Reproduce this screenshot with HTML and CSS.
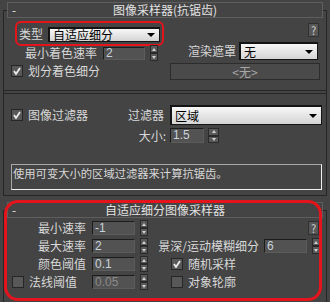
FILE: index.html
```html
<!DOCTYPE html>
<html lang="zh-CN">
<head>
    <meta charset="UTF-8">
    <title>图像采样器</title>
    <link rel="stylesheet" href="styles.css">
</head>
<body>

    <!-- Rollout: image sampler (antialiasing) -->
    <div class="rollout r1">
        <div class="roll-head"><span class="minus">-</span><span class="title">图像采样器(抗锯齿)</span></div>

        <div class="grp-type">
            <div class="col-left">
                <div class="type-box">
                    <span class="lbl-type">类型</span>
                    <div class="dropdown dd-type"><span>自适应细分</span><i class="caret"></i></div>
                </div>
                <div class="row msr-row">
                    <span class="lbl-msr">最小着色速率</span>
                    <div class="num n-msr">2</div>
                    <div class="spin"><b class="up"></b><b class="down"></b></div>
                </div>
                <div class="row chk-row">
                    <span class="chk on"><svg viewBox="0 0 10 10"><polyline points="2,5 4,8 8,2"/></svg></span>
                    <span>划分着色细分</span>
                </div>
            </div>
            <div class="col-right">
                <div class="help">?</div>
                <div class="row mask-row">
                    <span class="lbl-mask">渲染遮罩</span>
                    <div class="dropdown dd-mask"><span>无</span><i class="caret"></i></div>
                </div>
                <div class="btn-none">&lt;无&gt;</div>
            </div>
        </div>

        <div class="sep"></div>

        <div class="grp-filter">
            <div class="row filter-row">
                <span class="chk on"><svg viewBox="0 0 10 10"><polyline points="2,5 4,8 8,2"/></svg></span>
                <span class="lbl-imgf">图像过滤器</span>
                <span class="lbl-filter">过滤器</span>
                <div class="dropdown dd-filter"><span>区域</span><i class="caret"></i></div>
            </div>
            <div class="row size-row">
                <span class="lbl-size">大小:</span>
                <div class="num n-size">1.5</div>
                <div class="spin spin-wide"><b class="up"></b><b class="down"></b></div>
            </div>
            <div class="desc">使用可变大小的区域过滤器来计算抗锯齿。</div>
        </div>
    </div>

    <!-- Rollout: adaptive subdivision image sampler -->
    <div class="rollout r2">
        <div class="roll-head"><span class="minus">-</span><span class="title">自适应细分图像采样器</span></div>

        <div class="grid-adapt">
            <div class="row">
                <span class="lbl-r">最小速率</span>
                <div class="num n-adapt">-1</div>
                <div class="spin"><b class="up"></b><b class="down"></b></div>
            </div>
            <div class="row">
                <div class="help help-r2">?</div>
            </div>

            <div class="row">
                <span class="lbl-r">最大速率</span>
                <div class="num n-adapt">2</div>
                <div class="spin"><b class="up"></b><b class="down"></b></div>
            </div>
            <div class="row">
                <span class="lbl-dof">景深/运动模糊细分</span>
                <div class="num n-adapt">6</div>
                <div class="spin"><b class="up"></b><b class="down"></b></div>
            </div>

            <div class="row">
                <span class="lbl-r">颜色阈值</span>
                <div class="num n-adapt">0.1</div>
                <div class="spin"><b class="up"></b><b class="down"></b></div>
            </div>
            <div class="row chk-right">
                <span class="chk on"><svg viewBox="0 0 10 10"><polyline points="2,5 4,8 8,2"/></svg></span>
                <span>随机采样</span>
            </div>

            <div class="row">
                <span class="chk chk-normal"></span>
                <span class="lbl-normal">法线阈值</span>
                <div class="num n-adapt off">0.05</div>
                <div class="spin"><b class="up"></b><b class="down"></b></div>
            </div>
            <div class="row chk-right">
                <span class="chk"></span>
                <span>对象轮廓</span>
            </div>
        </div>

        <!-- red annotation ring drawn over the panel -->
        <div class="mark"></div>
    </div>

</body>
</html>
```

FILE: styles.css
```css
* {
    box-sizing: border-box;
    margin: 0;
    padding: 0;
}

body {
    width: 330px;
    height: 302px;
    overflow: hidden;
    background-color: #444444;
    color: #d8d8d8;
    font-family: "Noto Sans CJK SC", "Liberation Sans", sans-serif;
    font-size: 12px;
    line-height: 14px;
}

.rollout {
    margin: 10px 3px 0;
    border: 1px solid #262626;
}

.r1 {
    padding-bottom: 5px;
}

.r2 {
    position: relative;
    margin-top: 14px;
    border-bottom: none;
    height: 100px;
}

.roll-head {
    display: grid;
    grid-template-columns: 20px 1fr 20px;
    align-items: center;
    height: 16px;
    margin: -9px 3px 0;
    border: 1px solid #5e5e5e;
    background-color: #444444;
    color: #e2e2e2;
}

.roll-head .minus {
    padding-left: 4px;
}

.roll-head .title {
    text-align: center;
}

.row {
    display: flex;
    align-items: center;
}

/* first group: type / shading rate / render mask */
.grp-type {
    display: grid;
    grid-template-columns: 161px 1fr;
}

.col-left, .col-right {
    display: flex;
    flex-direction: column;
}

.type-box {
    display: flex;
    align-items: flex-end;
    gap: 5px;
    width: 149px;
    height: 25px;
    margin: 3px 0 0 11px;
    padding: 0 2px 2px;
    border: 2px solid #e3141b;
    border-radius: 6px;
}

.lbl-type {
    width: 24px;
    padding-bottom: 1px;
}

.dropdown {
    display: flex;
    align-items: center;
    justify-content: space-between;
    padding: 0 4px 0 3px;
    border: 1px solid #141414;
    border-top-width: 2px;
    border-left-width: 2px;
    background: linear-gradient(#f7f7f7, #d4d4d4);
    color: #000000;
}

.caret {
    width: 0;
    height: 0;
    border-top: 4px solid #000000;
    border-left: 4px solid transparent;
    border-right: 4px solid transparent;
}

.dd-type {
    width: 112px;
    height: 15px;
}

.msr-row {
    height: 16px;
    margin-top: -1px;
    padding-left: 21px;
}

.lbl-msr {
    width: 72px;
    margin-right: 6px;
}

.num {
    height: 13px;
    padding-left: 2px;
    border: 1px solid #2a2a2a;
    border-top-color: #1c1c1c;
    border-left-color: #1c1c1c;
    border-bottom-color: #5c5c5c;
    border-right-color: #5c5c5c;
    background-color: #525252;
    color: #c9d2dc;
    font-family: "Liberation Sans", sans-serif;
    font-size: 12px;
    line-height: 11px;
}

.num.off {
    color: #8a8a8a;
}

.n-msr {
    width: 42px;
    margin-right: 5px;
}

.spin {
    display: flex;
    flex-direction: column;
    flex-shrink: 0;
    width: 8px;
    height: 16px;
}

.spin b {
    flex: 1;
    display: flex;
    align-items: center;
    justify-content: center;
    border: 1px solid #2a2a2a;
    background-color: #5a5a5a;
}

.spin b::after {
    content: "";
    width: 0;
    height: 0;
    border-left: 2px solid transparent;
    border-right: 2px solid transparent;
}

.spin .up::after {
    border-bottom: 3px solid #d0d0d0;
}

.spin .down::after {
    border-top: 3px solid #d0d0d0;
}

.spin-wide {
    width: 11px;
    height: 15px;
}

.chk-row {
    height: 16px;
    margin-top: 2px;
    padding-left: 7px;
    gap: 5px;
}

.chk {
    display: inline-block;
    flex-shrink: 0;
    width: 12px;
    height: 12px;
    border: 1px solid #262626;
    background-color: #585858;
}

.chk svg {
    display: block;
    width: 10px;
    height: 10px;
    fill: none;
    stroke: #ececec;
    stroke-width: 1.8;
}

.help {
    align-self: flex-end;
    width: 11px;
    height: 14px;
    margin: 5px 7px 0 0;
    border: 1px solid #303030;
    background-color: #575757;
    color: #d0d0d0;
    font-size: 11px;
    line-height: 12px;
    text-align: center;
}

.mask-row {
    height: 18px;
    margin-top: 5px;
    padding-left: 23px;
}

.lbl-mask {
    width: 48px;
    margin-right: 3px;
}

.dd-mask {
    width: 79px;
    height: 18px;
}

.btn-none {
    width: 150px;
    height: 17px;
    margin: 3px 0 0 5px;
    border: 1px solid #2c2c2c;
    background-color: #4a4a4a;
    color: #a8a8a8;
    text-align: center;
    line-height: 15px;
}

.sep {
    height: 4px;
    margin-top: 10px;
    border-top: 1px solid #262626;
    border-bottom: 1px solid #262626;
}

/* second group: image filter */
.filter-row {
    height: 20px;
    margin-top: 11px;
    padding-left: 7px;
}

.lbl-imgf {
    width: 60px;
    margin-left: 5px;
}

.lbl-filter {
    width: 36px;
    margin: 0 6px 0 40px;
}

.dd-filter {
    width: 152px;
    height: 20px;
}

.size-row {
    height: 15px;
    margin-top: 3px;
}

.lbl-size {
    width: 162px;
    margin-right: 4px;
    text-align: right;
}

.n-size {
    width: 34px;
    height: 15px;
    margin-right: 4px;
    line-height: 13px;
}

.desc {
    height: 26px;
    margin: 21px 4px 0 7px;
    padding: 1px 0 0 1px;
    border: 1px solid #f0f0f0;
    border-top-color: #a8a8a8;
    border-left-color: #a8a8a8;
    font-size: 11.3px;
}

/* adaptive subdivision rollout */
.grid-adapt {
    display: grid;
    grid-template-columns: 154px 1fr;
    grid-auto-rows: 18px;
    padding-top: 1px;
}

.lbl-r {
    width: 82px;
    margin-right: 6px;
    text-align: right;
}

.n-adapt {
    width: 43px;
    height: 14px;
    margin-right: 5px;
    line-height: 12px;
}

.help-r2 {
    margin: 0 7px 0 auto;
    align-self: center;
}

.lbl-dof {
    width: 101px;
    margin-right: 5px;
    text-align: right;
    white-space: nowrap;
}

.chk-right {
    padding-left: 13px;
    gap: 5px;
}

.chk-normal {
    margin-left: 8px;
}

.lbl-normal {
    width: 48px;
    margin: 0 15px 0 5px;
}

.mark {
    position: absolute;
    left: 0;
    top: -11px;
    width: 318px;
    height: 101px;
    border: 3px solid #e3141b;
    border-radius: 14px;
    pointer-events: none;
}
```
